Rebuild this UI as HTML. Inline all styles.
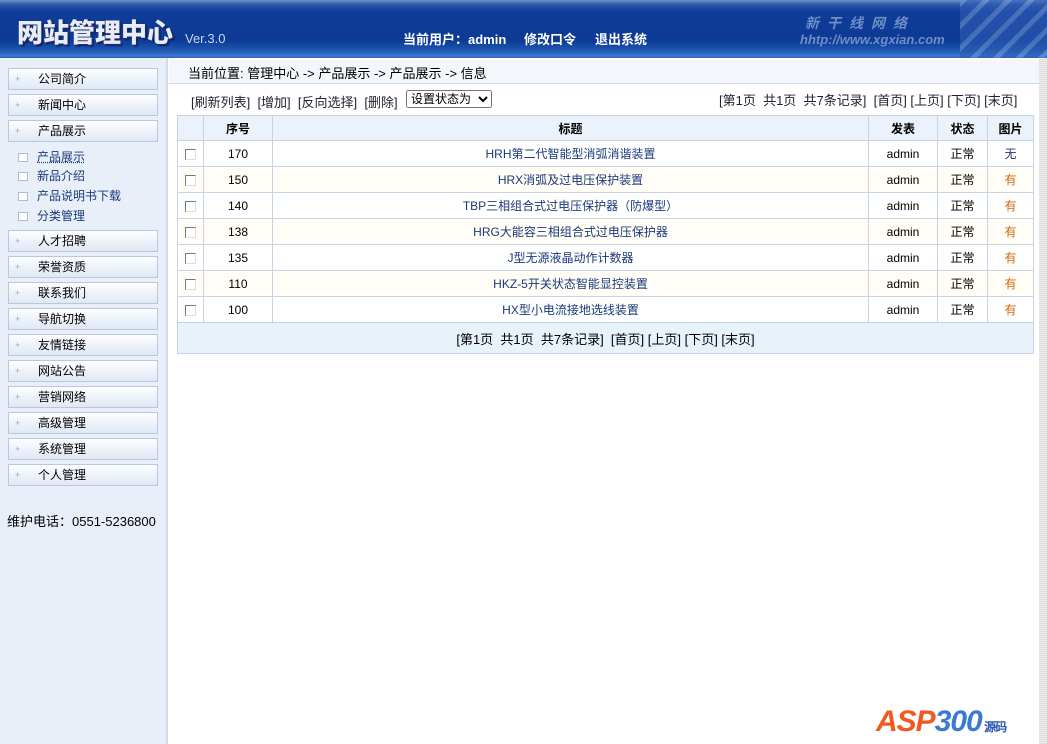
<!DOCTYPE html>
<html><head><meta charset="utf-8"><style>
*{margin:0;padding:0;box-sizing:border-box}
body{width:1047px;height:744px;overflow:hidden;background:#fff;font:12px "Liberation Sans","Noto Sans CJK SC",sans-serif;color:#000;position:relative}
#hd{position:absolute;left:0;top:0;width:1047px;height:58px;background:linear-gradient(#6f8fc8 0,#2c55a8 5px,#0f3c98 12px,#0c3a94 40px,#1d55b0 50px,#3c78cc 56px,#2a5fb8 58px)}
#hd .logo{position:absolute;left:17px;top:13px;font-size:26px;font-weight:900;color:#e8ecf4;letter-spacing:0px;text-shadow:1px 1px 0 #22306a,2px 2px 1px #102060}
#hd .ver{position:absolute;left:185px;top:31px;font-size:13px;color:#c9d6ee}
#hd .nav{position:absolute;top:29px;color:#fff;font-weight:bold;font-size:13px}
#hd .brand{position:absolute;left:805px;top:13px;color:#6f8ec8;font-style:italic;font-weight:bold;font-size:14px;letter-spacing:8px}
#hd .url{position:absolute;left:800px;top:32px;color:#6f8ec8;font-style:italic;font-weight:bold;font-size:13px}
#hd .kb{position:absolute;left:960px;top:0;width:87px;height:58px;background:repeating-linear-gradient(135deg,#6d92d2 0 5px,#2f5cb4 5px 16px);opacity:.6}
#sb{position:absolute;left:0;top:58px;width:168px;height:686px;background:#e9eff9;border-right:2px solid #d0dcee}
.btn{position:absolute;left:8px;width:150px;height:22px;background:linear-gradient(#fdfeff,#dfe8f5);border:1px solid #b8c8df;font-size:12px;line-height:20px;padding-left:29px}
.btn:before{content:"+";position:absolute;left:6px;top:0;color:#9ab;font-size:9px}
.sub{position:absolute;left:37px;font-size:12px;color:#1a3a7a}
.sub:before{content:"";position:absolute;left:-19px;top:5px;width:8px;height:7px;border:1px solid #b0bccf;background:#fff}
#crumb{position:absolute;left:169px;top:60px;width:870px;height:24px;background:#f3f7fc;border-bottom:1px solid #d0dceb;padding:3px 0 0 19px;font-size:13px}
#scroll{position:absolute;left:1039px;top:58px;width:8px;height:686px;background:repeating-linear-gradient(#eee 0 1px,#ddd 1px 2px)}
.ln{position:absolute;font-size:13px;color:#223;white-space:pre}
select{position:absolute;left:406px;top:90px;width:86px;height:18px;font-size:12px;font-family:inherit}
table{position:absolute;left:177px;top:115px;width:857px;border-collapse:collapse}
td,th{border:1px solid #c6d4e6;text-align:center;height:26px;font-size:12px}
th{background:#eaf2fb;height:25px;font-weight:bold}
td.t{color:#1a3a7a}
tr.a td{background:#fffdf5}
.cb{display:inline-block;width:11px;height:11px;border:1px solid #777;border-right-color:#ddd;border-bottom-color:#ddd;background:#fff;vertical-align:middle}
.y{color:#d06a10}.n{color:#1a3a7a}
td.ft{background:#e8f2fb;height:31px;font-size:13px;white-space:pre}
#logo{position:absolute;left:876px;top:705px;font:bold italic 30px "Liberation Sans",sans-serif;color:#f05a20;letter-spacing:-1px}
</style></head><body>
<div id="hd">
<div class="logo">网站管理中心</div><div class="ver">Ver.3.0</div>
<div class="nav" style="left:403px">当前用户：admin</div>
<div class="nav" style="left:524px">修改口令</div>
<div class="nav" style="left:595px">退出系统</div>
<div class="kb"></div>
<div class="brand">新干线网络</div>
<div class="url">hhtp://www.xgxian.com</div>
</div>
<div id="sb"></div>
<div class="btn" style="top:68px">公司简介</div>
<div class="btn" style="top:94px">新闻中心</div>
<div class="btn" style="top:120px">产品展示</div>
<div class="sub" style="top:148px;text-decoration:underline dotted">产品展示</div>
<div class="sub" style="top:167px">新品介绍</div>
<div class="sub" style="top:187px">产品说明书下载</div>
<div class="sub" style="top:207px">分类管理</div>
<div class="btn" style="top:230px">人才招聘</div>
<div class="btn" style="top:256px">荣誉资质</div>
<div class="btn" style="top:282px">联系我们</div>
<div class="btn" style="top:308px">导航切换</div>
<div class="btn" style="top:334px">友情链接</div>
<div class="btn" style="top:360px">网站公告</div>
<div class="btn" style="top:386px">营销网络</div>
<div class="btn" style="top:412px">高级管理</div>
<div class="btn" style="top:438px">系统管理</div>
<div class="btn" style="top:464px">个人管理</div>
<div style="position:absolute;left:7px;top:511px;font-size:13px">维护电话：0551-5236800</div>
<div id="crumb">当前位置: 管理中心  -&gt; 产品展示  -&gt; 产品展示  -&gt; 信息</div>
<div id="scroll"></div>
<div class="ln" style="left:191px;top:92px">[刷新列表]  [增加]  [反向选择]  [删除]</div>
<select><option>设置状态为</option></select>
<div class="ln" style="left:719px;top:90px">[第1页  共1页  共7条记录]  [首页] [上页] [下页] [末页]</div>
<table>
<tr><th style="width:26px"></th><th style="width:69px">序号</th><th>标题</th><th style="width:69px">发表</th><th style="width:50px">状态</th><th style="width:46px">图片</th></tr>
<tr><td><span class="cb"></span></td><td>170</td><td class="t">HRH第二代智能型消弧消谐装置</td><td>admin</td><td>正常</td><td class="n">无</td></tr>
<tr class="a"><td><span class="cb"></span></td><td>150</td><td class="t">HRX消弧及过电压保护装置</td><td>admin</td><td>正常</td><td class="y">有</td></tr>
<tr><td><span class="cb"></span></td><td>140</td><td class="t">TBP三相组合式过电压保护器（防爆型）</td><td>admin</td><td>正常</td><td class="y">有</td></tr>
<tr class="a"><td><span class="cb"></span></td><td>138</td><td class="t">HRG大能容三相组合式过电压保护器</td><td>admin</td><td>正常</td><td class="y">有</td></tr>
<tr><td><span class="cb"></span></td><td>135</td><td class="t">J型无源液晶动作计数器</td><td>admin</td><td>正常</td><td class="y">有</td></tr>
<tr class="a"><td><span class="cb"></span></td><td>110</td><td class="t">HKZ-5开关状态智能显控装置</td><td>admin</td><td>正常</td><td class="y">有</td></tr>
<tr><td><span class="cb"></span></td><td>100</td><td class="t">HX型小电流接地选线装置</td><td>admin</td><td>正常</td><td class="y">有</td></tr>
<tr><td colspan="6" class="ft">[第1页  共1页  共7条记录]  [首页] [上页] [下页] [末页]</td></tr>
</table>
<div id="logo">ASP<span style="color:#3a7ad0">300</span><span style="font-size:12px;color:#2a5ab0;font-style:normal"> 源码</span></div>
</body></html>
